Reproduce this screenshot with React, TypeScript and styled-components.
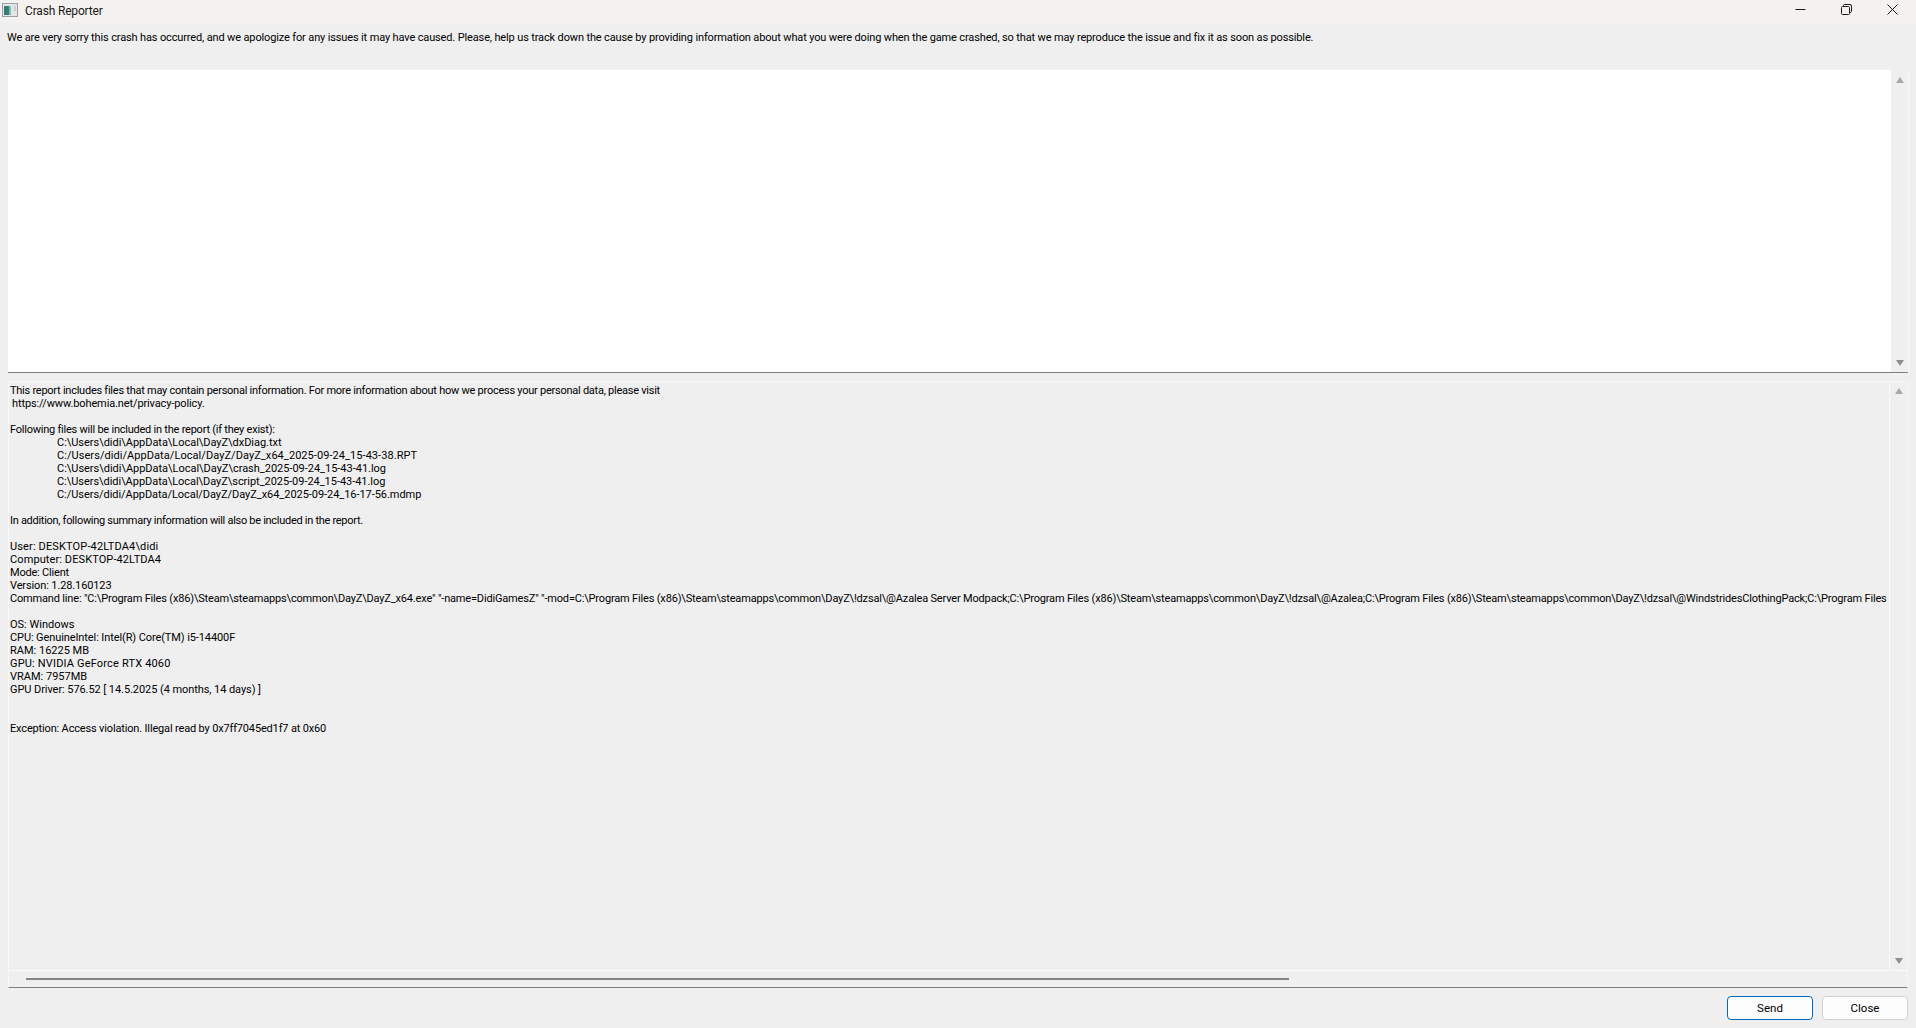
import React from "react";
import styled, { createGlobalStyle } from "styled-components";

const GlobalStyle = createGlobalStyle`
  html, body {
    margin: 0;
    padding: 0;
    background-color: #efefef;
  }
`;

const Window = styled.div`
  width: 1916px;
  height: 1028px;
  display: flex;
  flex-direction: column;
  overflow: hidden;
  background-color: #efefef;
  color: #000;
  font-family: Roboto, "Liberation Sans", Arial, sans-serif;
  font-size: 11px;
`;

const TitleBar = styled.div`
  height: 23px;
  box-sizing: border-box;
  display: flex;
  align-items: center;
  background-color: #f3f2f0;
  padding: 0 0 4px 2px;
`;

const Title = styled.span`
  margin: 2px 0 0 7px;
  font-size: 12px;
  letter-spacing: -0.17px;
  color: #1a1a1a;
  flex: 1;
`;

const Controls = styled.div`
  display: flex;
  align-items: center;
  padding-right: 18px;
  gap: 35px;
  height: 19px;
`;

const Intro = styled.div`
  height: 47px;
  padding: 8px 0 0 7px;
  box-sizing: border-box;
  line-height: 14px;
  letter-spacing: -0.139px;
`;

const Editor = styled.div`
  height: 303px;
  box-sizing: border-box;
  margin: 0 8px;
  display: flex;
  border-bottom: 1px solid #808080;
  box-shadow: 1px 0 0 #f7f7f7;
`;

const EditorText = styled.div`
  flex: 1;
  background-color: #fff;
`;

const VScroll = styled.div<{ $top: number }>`
  width: 17px;
  display: flex;
  flex-direction: column;
  justify-content: space-between;
  align-items: center;
  padding: ${({ $top }) => $top}px 0 6px;
  box-sizing: border-box;
`;

const Arrow = styled.div<{ $down?: boolean }>`
  width: 0;
  height: 0;
  border-left: 4px solid transparent;
  border-right: 4px solid transparent;
  ${({ $down }) =>
    $down ? "border-top: 6px solid #8f8f8f;" : "border-bottom: 6px solid #a8a8a8;"}
`;

const Report = styled.div`
  height: 607px;
  box-sizing: border-box;
  margin: 8px 8px 0;
  display: flex;
  flex-direction: column;
  border-bottom: 1px solid #808080;
  border-left: 1px solid #f8f8f8;
  border-top: 1px solid #f6f6f6;
  border-right: 1px solid #f6f6f6;
`;

const ReportBody = styled.div`
  flex: 1;
  display: flex;
  min-height: 0;
  border-bottom: 1px solid #fafafa;
`;

const ReportText = styled.div`
  flex: 1;
  min-width: 0;
  padding: 2px 0 0 1px;
  overflow: hidden;
  border-right: 1px solid #fafafa;
`;

const Line = styled.div<{ $indent?: boolean; $nudge?: boolean; $track?: number }>`
  height: 13px;
  line-height: 13px;
  white-space: pre;
  letter-spacing: ${({ $track }) => $track ?? 0}px;
  padding-left: ${({ $indent, $nudge }) => ($indent ? "47px" : $nudge ? "2px" : "0")};
`;

const HScroll = styled.div`
  height: 16px;
  flex: none;
  display: flex;
  align-items: center;
  padding-left: 17px;
`;

const HThumb = styled.div`
  width: 1263px;
  height: 2px;
  background-color: #858585;
`;

const Footer = styled.div`
  display: flex;
  justify-content: flex-end;
  gap: 9px;
  padding: 8px 8px 0 0;
`;

const Button = styled.button<{ $primary?: boolean }>`
  width: 86px;
  height: 24px;
  padding: 0;
  box-sizing: border-box;
  background-color: #fdfdfd;
  border: 1px solid ${({ $primary }) => ($primary ? "#0067c0" : "#d0d0d0")};
  border-radius: 4px;
  font-family: Roboto, "Liberation Sans", Arial, sans-serif;
  font-size: 11.5px;
  color: #000;
`;

// track: per-line letter spacing, the original font has different widths
const lines: { text: string; indent?: boolean; nudge?: boolean; track?: number }[] = [
  { text: "This report includes files that may contain personal information. For more information about how we process your personal data, please visit", track: -0.25 },
  { text: "https://www.bohemia.net/privacy-policy.", nudge: true, track: -0.12 },
  { text: " " },
  { text: "Following files will be included in the report (if they exist):", track: -0.23 },
  { text: "C:\\Users\\didi\\AppData\\Local\\DayZ\\dxDiag.txt", indent: true, track: -0.03 },
  { text: "C:/Users/didi/AppData/Local/DayZ/DayZ_x64_2025-09-24_15-43-38.RPT", indent: true, track: 0.06 },
  { text: "C:\\Users\\didi\\AppData\\Local\\DayZ\\crash_2025-09-24_15-43-41.log", indent: true, track: -0.02 },
  { text: "C:\\Users\\didi\\AppData\\Local\\DayZ\\script_2025-09-24_15-43-41.log", indent: true, track: -0.04 },
  { text: "C:/Users/didi/AppData/Local/DayZ/DayZ_x64_2025-09-24_16-17-56.mdmp", indent: true, track: -0.05 },
  { text: " " },
  { text: "In addition, following summary information will also be included in the report.", track: -0.29 },
  { text: " " },
  { text: "User: DESKTOP-42LTDA4\\didi", track: 0.14 },
  { text: "Computer: DESKTOP-42LTDA4", track: 0.1 },
  { text: "Mode: Client", track: -0.2 },
  { text: "Version: 1.28.160123", track: -0.12 },
  { text: "Command line: \"C:\\Program Files (x86)\\Steam\\steamapps\\common\\DayZ\\DayZ_x64.exe\" \"-name=DidiGamesZ\" \"-mod=C:\\Program Files (x86)\\Steam\\steamapps\\common\\DayZ\\!dzsal\\@Azalea Server Modpack;C:\\Program Files (x86)\\Steam\\steamapps\\common\\DayZ\\!dzsal\\@Azalea;C:\\Program Files (x86)\\Steam\\steamapps\\common\\DayZ\\!dzsal\\@WindstridesClothingPack;C:\\Program Files", track: -0.17 },
  { text: " " },
  { text: "OS: Windows" },
  { text: "CPU: GenuineIntel: Intel(R) Core(TM) i5-14400F", track: -0.1 },
  { text: "RAM: 16225 MB" },
  { text: "GPU: NVIDIA GeForce RTX 4060", track: 0.17 },
  { text: "VRAM: 7957MB" },
  { text: "GPU Driver: 576.52 [ 14.5.2025 (4 months, 14 days) ]", track: -0.07 },
  { text: " " },
  { text: " " },
  { text: "Exception: Access violation. Illegal read by 0x7ff7045ed1f7 at 0x60", track: -0.16 },
];

function AppIcon() {
  return (
    <svg width="16" height="14" viewBox="0 0 16 14">
      <rect x="0.5" y="0.5" width="15" height="13" fill="#e4e6e6" stroke="#9a9fa3" />
      <rect x="2" y="3" width="5" height="9" fill="#2f7f78" />
      <rect x="7" y="3" width="2" height="9" fill="#8fb7b0" />
      <rect x="12" y="3" width="2" height="5" fill="#c3d6d2" />
    </svg>
  );
}

function MinimizeIcon() {
  return (
    <svg width="11" height="11" viewBox="0 0 11 11">
      <path d="M0.5 5.5H10.5" stroke="#1a1a1a" fill="none" />
    </svg>
  );
}

function RestoreIcon() {
  return (
    <svg width="11" height="11" viewBox="0 0 11 11">
      <rect x="0.5" y="2.5" width="8" height="8" rx="1" stroke="#1a1a1a" fill="none" />
      <path d="M2.5 2.5V1.5Q2.5 0.5 3.5 0.5H9Q10.5 0.5 10.5 2V7.5Q10.5 8.5 8.5 8.5" stroke="#1a1a1a" fill="none" />
    </svg>
  );
}

function CloseIcon() {
  return (
    <svg width="11" height="11" viewBox="0 0 11 11">
      <path d="M0.5 0.5L10.5 10.5M10.5 0.5L0.5 10.5" stroke="#1a1a1a" fill="none" />
    </svg>
  );
}

function App() {
  return (
    <>
      <GlobalStyle />
      <Window>
        <TitleBar>
          <AppIcon />
          <Title>Crash Reporter</Title>
          <Controls>
            <MinimizeIcon />
            <RestoreIcon />
            <CloseIcon />
          </Controls>
        </TitleBar>
        <Intro>
          We are very sorry this crash has occurred, and we apologize for any issues it may have caused. Please, help us track down the cause by providing information about what you were doing when the game crashed, so that we may reproduce the issue and fix it as soon as possible.
        </Intro>
        <Editor>
          <EditorText />
          <VScroll $top={7}>
            <Arrow />
            <Arrow $down />
          </VScroll>
        </Editor>
        <Report>
          <ReportBody>
            <ReportText>
              {lines.map((line, i) => (
                <Line key={i} $indent={line.indent} $nudge={line.nudge} $track={line.track}>
                  {line.text}
                </Line>
              ))}
            </ReportText>
            <VScroll $top={6}>
              <Arrow />
              <Arrow $down />
            </VScroll>
          </ReportBody>
          <HScroll>
            <HThumb />
          </HScroll>
        </Report>
        <Footer>
          <Button $primary>Send</Button>
          <Button>Close</Button>
        </Footer>
      </Window>
    </>
  );
}

export default App;
